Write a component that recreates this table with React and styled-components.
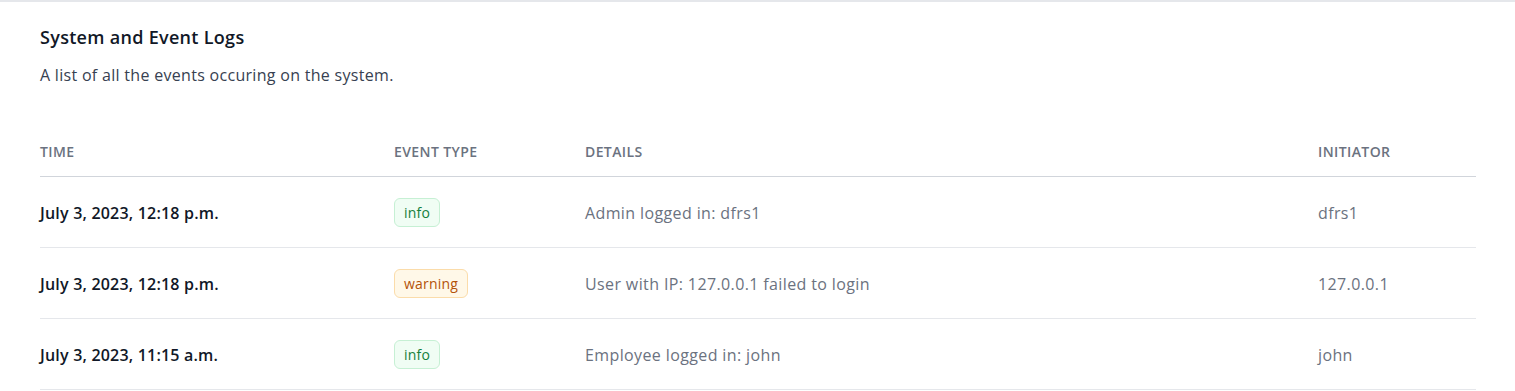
import React from "react";
import styled, { createGlobalStyle } from "styled-components";

const GlobalStyle = createGlobalStyle`
  html, body {
    margin: 0;
    padding: 0;
    background: #ffffff;
    font-family: "Open Sans", "Noto Sans", Arial, sans-serif;
    -webkit-font-smoothing: antialiased;
  }
`;

const Card = styled.section`
  background: #ffffff;
  border-top: 2px solid #e5e7eb;
  padding: 23px 39px 0 40px;
`;

const Title = styled.h1`
  margin: 0;
  font-size: 18px;
  line-height: 24px;
  font-weight: 600;
  letter-spacing: 0.3px;
  color: #111827;
`;

const Subtitle = styled.p`
  margin: 14px 0 0;
  font-size: 16px;
  line-height: 24px;
  letter-spacing: 0.3px;
  color: #374151;
`;

const Table = styled.table`
  width: 100%;
  margin-top: 41px;
  border-collapse: collapse;
  table-layout: fixed;
`;

const HeadCell = styled.th`
  text-align: left;
  padding: 14px 0;
  font-size: 14px;
  line-height: 20px;
  font-weight: 600;
  letter-spacing: 0.4px;
  text-transform: uppercase;
  color: #6b7280;
  border-bottom: 1px solid #d1d5db;
`;

const Row = styled.tr`
  border-bottom: 1px solid #e5e7eb;
`;

const Cell = styled.td`
  padding: 21px 0 20px;
  font-size: 16px;
  line-height: 24px;
  vertical-align: middle;
  color: ${(p) => (p.$strong ? "#111827" : "#6b7280")};
  font-weight: ${(p) => (p.$strong ? 600 : 400)};
  letter-spacing: ${(p) => (p.$strong ? "0.2px" : "0.38px")};
`;

const badgeTones = {
  info: { bg: "#f0fdf4", border: "#c6f0d4", color: "#15803d" },
  warning: { bg: "#fff8e8", border: "#fbdcaa", color: "#b45309" },
};

const Badge = styled.span`
  display: inline-block;
  padding: 3px 9px;
  font-size: 14px;
  line-height: 21px;
  font-weight: 500;
  letter-spacing: 0.2px;
  border-radius: 6px;
  background: ${(p) => badgeTones[p.$tone].bg};
  border: 1px solid ${(p) => badgeTones[p.$tone].border};
  color: ${(p) => badgeTones[p.$tone].color};
`;

const logs = [
  { time: "July 3, 2023, 12:18 p.m.", type: "info", details: "Admin logged in: dfrs1", initiator: "dfrs1" },
  { time: "July 3, 2023, 12:18 p.m.", type: "warning", details: "User with IP: 127.0.0.1 failed to login", initiator: "127.0.0.1" },
  { time: "July 3, 2023, 11:15 a.m.", type: "info", details: "Employee logged in: john", initiator: "john" },
];

export default function App() {
  return (
    <>
      <GlobalStyle />
      <Card>
        <Title>System and Event Logs</Title>
        <Subtitle>A list of all the events occuring on the system.</Subtitle>
        <Table>
          <colgroup>
            <col style={{ width: 354 }} />
            <col style={{ width: 191 }} />
            <col />
            <col style={{ width: 158 }} />
          </colgroup>
          <thead>
            <tr>
              <HeadCell>Time</HeadCell>
              <HeadCell>Event Type</HeadCell>
              <HeadCell>Details</HeadCell>
              <HeadCell>Initiator</HeadCell>
            </tr>
          </thead>
          <tbody>
            {logs.map((log, i) => (
              <Row key={i}>
                <Cell $strong>{log.time}</Cell>
                <Cell>
                  <Badge $tone={log.type}>{log.type}</Badge>
                </Cell>
                <Cell>{log.details}</Cell>
                <Cell>{log.initiator}</Cell>
              </Row>
            ))}
          </tbody>
        </Table>
      </Card>
    </>
  );
}
